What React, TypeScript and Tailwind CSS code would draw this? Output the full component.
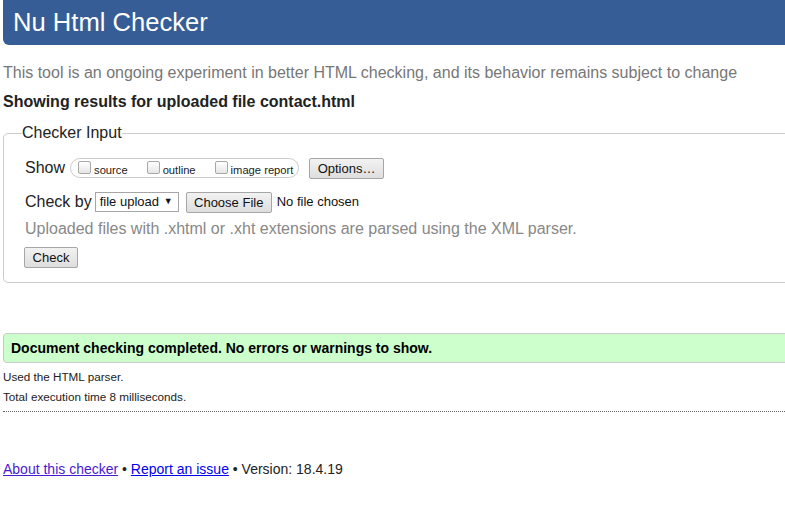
function Checkbox({ label }: { label: string }) {
  return (
    <label className="flex items-start">
      <span className="mt-[2px] w-[13px] h-[13px] rounded-[2px] border border-[#a8a8a8] bg-linear-to-b from-white to-[#e6e6e6]" />
      <span className="ml-[3px] mt-[5px] text-[11.2px] leading-[13px] text-[#222]">{label}</span>
    </label>
  );
}

function Btn({ children, className = "" }: { children: React.ReactNode; className?: string }) {
  return (
    <button
      className={
        "h-[21px] px-[7px] rounded-[2px] border border-[#a6a6a6] bg-linear-to-b from-[#f2f2f2] to-[#dedede] text-[13px] leading-none text-[#111] " +
        className
      }
    >
      {children}
    </button>
  );
}

export default function App() {
  return (
    <div className="w-[785px] h-[522px] overflow-hidden bg-white font-['Liberation_Sans',Arial,sans-serif]">
      <div className="w-[820px] pl-[3px]">
        <header className="h-[45px] flex items-center pl-[10px] bg-[#365d95] rounded-bl-[6px]">
          <h1 className="text-[25.6px] text-white">Nu Html Checker</h1>
        </header>

        <p className="mt-[19px] text-[16px] leading-[18px] text-[#777]">
          This tool is an ongoing experiment in better HTML checking, and its behavior remains subject to
          change
        </p>
        <p className="mt-[11px] text-[16px] leading-[18px] font-bold text-[#222]">
          Showing results for uploaded file contact.html
        </p>

        <fieldset className="mt-[13px] border border-[#ccc] rounded-[5px] pl-[21px] pb-[13px]">
          <legend className="-ml-[3px] text-[16px] leading-[18px] text-[#222]">Checker Input</legend>

          <div className="mt-[15px] h-[22px] flex items-center text-[#222]">
            <span className="text-[16px]">Show</span>
            <div className="ml-[5px] h-[20px] w-[229px] flex items-start gap-[19px] pl-[7px] rounded-full border border-[#ccc]">
              <Checkbox label="source" />
              <Checkbox label="outline" />
              <Checkbox label="image report" />
            </div>
            <Btn className="ml-[10px] w-[75px]">Options…</Btn>
          </div>

          <div className="mt-[13px] h-[20px] flex items-center text-[#222]">
            <span className="text-[16px]">Check by</span>
            <div className="ml-[3px] h-[20px] w-[84px] flex items-center justify-between pl-[4px] pr-[5px] border border-[#a6a6a6] bg-white">
              <span className="text-[13px] text-[#111]">file upload</span>
              <span className="text-[9px] text-[#111]">▼</span>
            </div>
            <Btn className="ml-[7px] h-[20px] w-[86px]">Choose File</Btn>
            <span className="ml-[5px] text-[13px] text-[#111]">No file chosen</span>
          </div>

          <p className="mt-[8px] text-[16px] leading-[18px] text-[#888]">
            Uploaded files with .xhtml or .xht extensions are parsed using the XML parser.
          </p>

          <Btn className="mt-[9px] -ml-[1px] w-[54px]">Check</Btn>
        </fieldset>

        <div className="mt-[50px] h-[30px] flex items-center pl-[7px] border border-[#c8c8c8] rounded-l-[4px] bg-[#ccffcc]">
          <p className="text-[14px] font-bold text-black">
            Document checking completed. No errors or warnings to show.
          </p>
        </div>

        <p className="mt-[7px] text-[11.7px] leading-[14px] text-[#222]">Used the HTML parser.</p>
        <p className="mt-[6px] text-[11.7px] leading-[14px] text-[#222]">Total execution time 8 milliseconds.</p>
        <div className="mt-[7px] w-[782px] border-b border-dotted border-[#666]" />

        <p className="mt-[49px] text-[14px] leading-[16px] text-[#222]">
          <a href="#" className="underline text-[#4a1ad0]">About this checker</a> •{" "}
          <a href="#" className="underline text-[#0000ee]">Report an issue</a> • Version: 18.4.19
        </p>
      </div>
    </div>
  );
}
